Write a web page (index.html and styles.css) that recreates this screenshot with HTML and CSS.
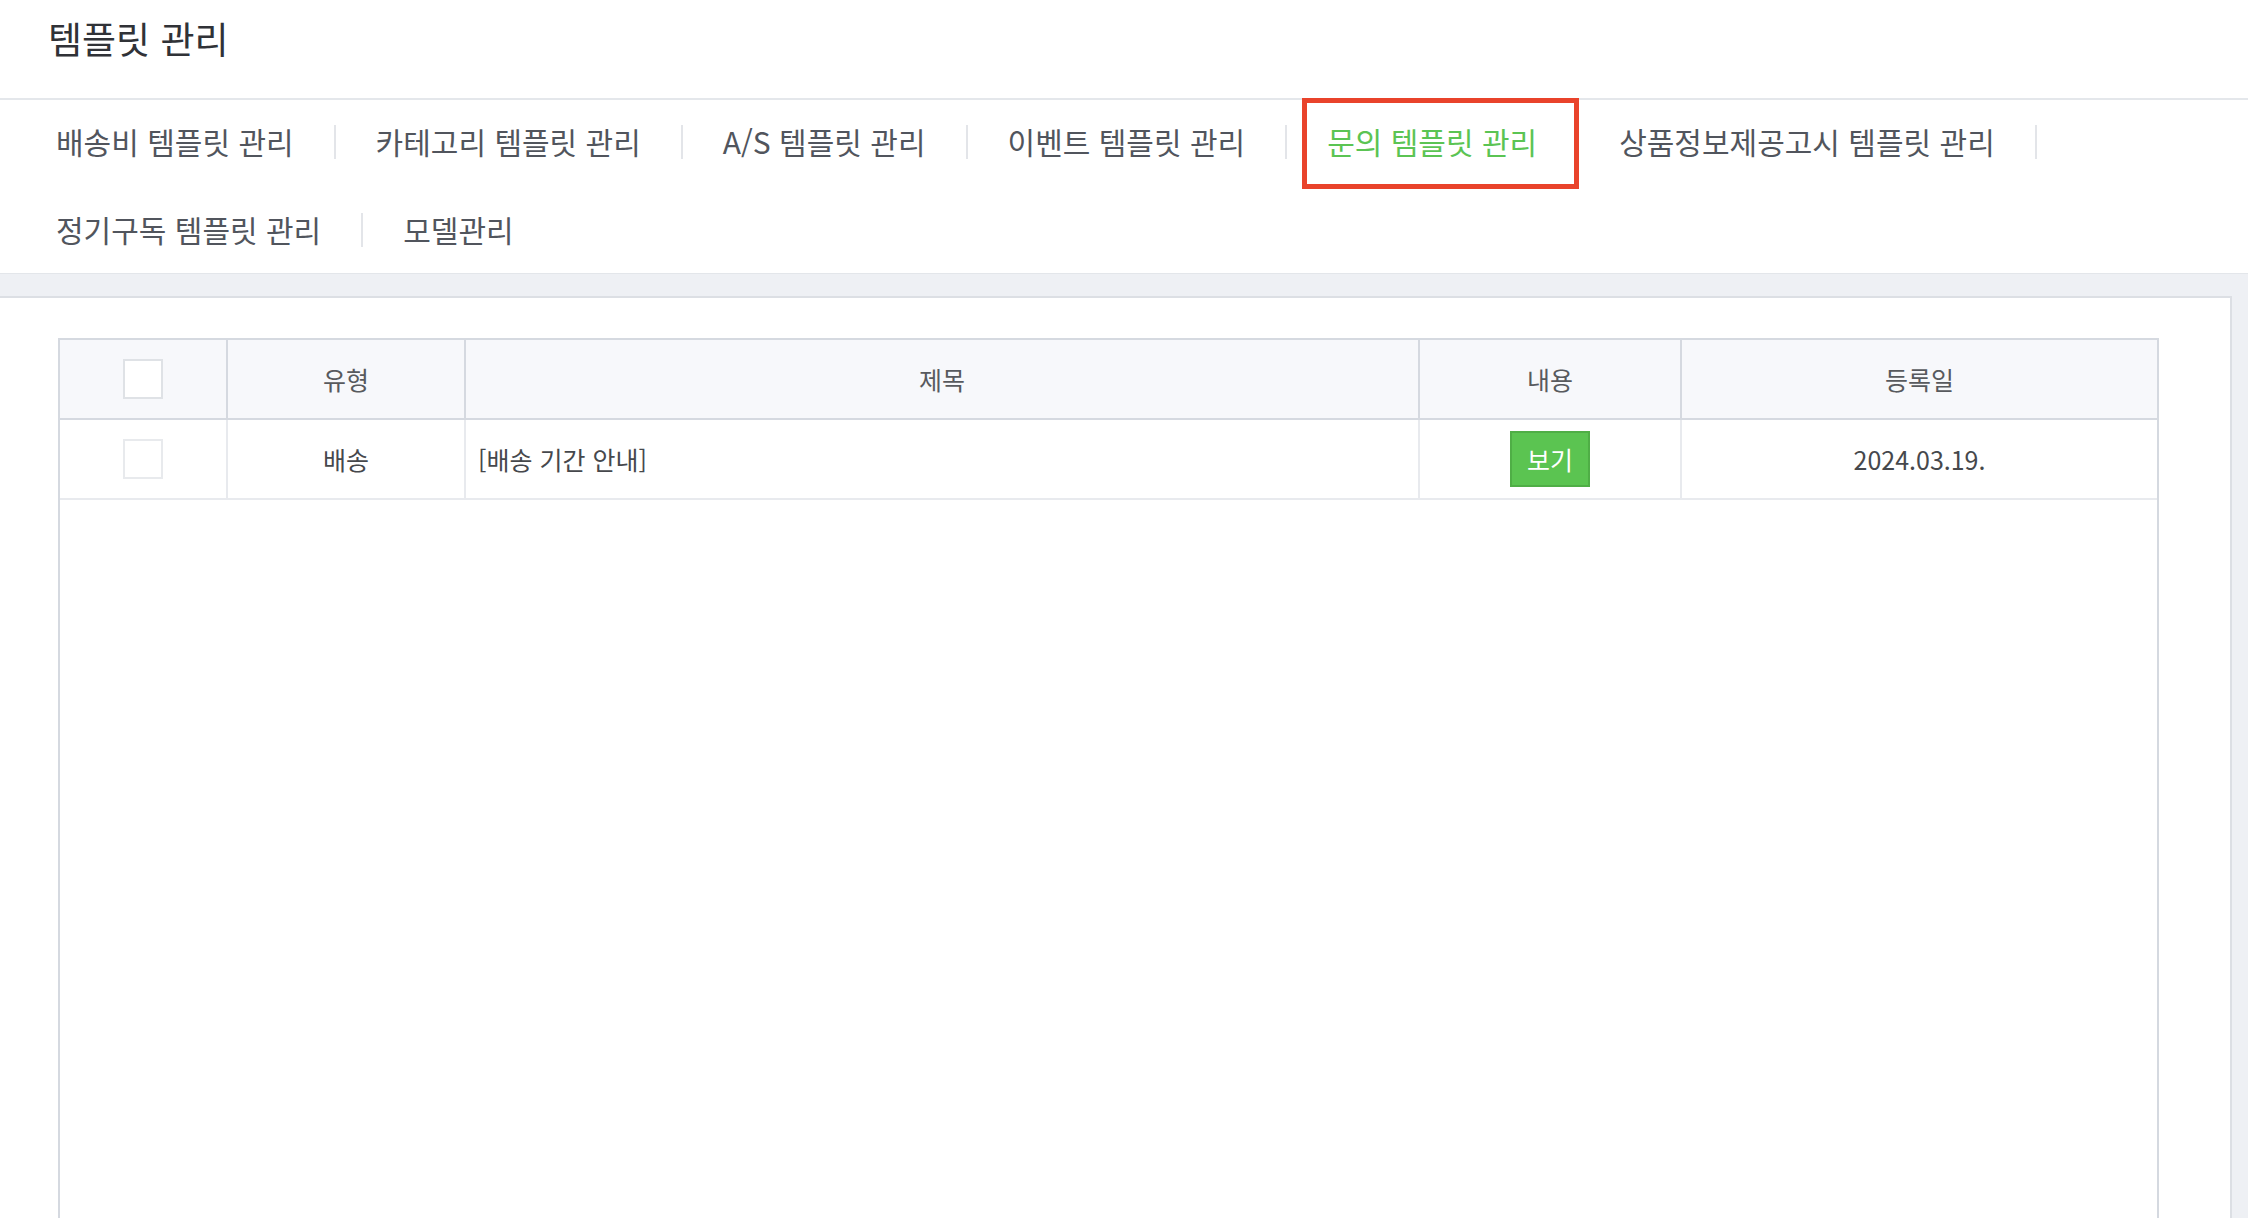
FILE: index.html
```html
<!DOCTYPE html>
<html lang="ko">

<head>
    <meta charset="UTF-8">
    <meta name="viewport" content="width=device-width, initial-scale=1.0">
    <title>템플릿 관리</title>
    <link rel="stylesheet" href="styles.css">
</head>

<body>
    <div class="Page">
        <div class="pageHead">
            <h1>템플릿 관리</h1>
        </div>
        <ul class="tabs">
            <li>배송비 템플릿 관리</li>
            <li>카테고리 템플릿 관리</li>
            <li>A/S 템플릿 관리</li>
            <li>이벤트 템플릿 관리</li>
            <li class="on">문의 템플릿 관리</li>
            <li>상품정보제공고시 템플릿 관리</li>
            <li>정기구독 템플릿 관리</li>
            <li>모델관리</li>
        </ul>
        <div class="body">
            <div class="panel">
                <div class="tableBox">
                    <table>
                        <thead>
                            <tr>
                                <th class="cCheck"><input type="checkbox" class="chk"></th>
                                <th class="cType">유형</th>
                                <th class="cTitle">제목</th>
                                <th class="cView">내용</th>
                                <th>등록일</th>
                            </tr>
                        </thead>
                        <tbody>
                            <tr>
                                <td><input type="checkbox" class="chk"></td>
                                <td>배송</td>
                                <td class="subject">[배송 기간 안내]</td>
                                <td><button class="btnView">보기</button></td>
                                <td class="date">2024.03.19.</td>
                            </tr>
                        </tbody>
                    </table>
                </div>
            </div>
        </div>
    </div>
</body>

</html>
```
FILE: styles.css
```css
* {
    border: 0px;
    margin: 0px;
    padding: 0px;
    box-sizing: border-box;
}

html,
body {
    height: 100%;
    overflow: hidden;
}

body {
    font-family: "Noto Sans CJK KR", "Noto Sans", sans-serif;
    color: #51555d;
    background-color: #fff;
}

.Page {
    display: flex;
    flex-direction: column;
    height: 100vh;
}

.pageHead {
    height: 100px;
    padding: 19px 0 0 48px;
    border-bottom: 2px solid #e4e7eb;
}

.pageHead h1 {
    font-size: 37px;
    font-weight: 400;
    line-height: 38px;
    color: #303237;
}

.tabs {
    list-style: none;
    display: flex;
    flex-wrap: wrap;
    row-gap: 54px;
    padding: 25px 0 26px 16px;
    border-bottom: 1px solid #e3e6ea;
}

.tabs li {
    position: relative;
    height: 34px;
    padding: 0 40px;
    font-size: 30px;
    line-height: 32px;
    border-right: 2px solid #e3e5e9;
    cursor: pointer;
}

.tabs li:last-child {
    border-right: 0;
}

.tabs li.on {
    color: #5bc453;
}

.tabs li.on::after {
    content: "";
    position: absolute;
    top: -27px;
    bottom: -30px;
    left: 15px;
    right: -2px;
    border: 5px solid #e9432b;
}

.body {
    flex: 1;
    display: flex;
    min-height: 0;
    padding-top: 22px;
    background-color: #eef0f4;
}

.panel {
    flex: 1;
    display: flex;
    flex-direction: column;
    margin-right: 16px;
    padding: 40px 71px 0 58px;
    background-color: #fff;
    border-top: 2px solid #dcdfe4;
    border-right: 2px solid #dcdfe4;
}

.tableBox {
    flex: 1;
    border: 2px solid #d5d9e0;
    border-bottom: 0;
}

table {
    width: 100%;
    table-layout: fixed;
    border-spacing: 0;
    font-size: 25px;
}

th,
td {
    height: 80px;
    text-align: center;
    vertical-align: middle;
}

th {
    font-weight: 400;
    color: #585a5e;
    background-color: #f7f8fb;
    border-right: 2px solid #d5d9e0;
    border-bottom: 2px solid #d5d9e0;
}

td {
    color: #46484c;
    border-right: 2px solid #e8eaee;
    border-bottom: 2px solid #e8eaee;
}

th:last-child,
td:last-child {
    border-right: 0;
}

.cCheck {
    width: 168px;
}

.cType {
    width: 238px;
}

.cTitle {
    width: 954px;
}

.cView {
    width: 262px;
}

.chk {
    appearance: none;
    display: block;
    width: 40px;
    height: 40px;
    margin: 0 auto;
    background-color: #fff;
    border: 2px solid #dfe2e6;
}

td .chk {
    border-color: #e8eaed;
}

td.subject {
    text-align: left;
    padding-left: 12px;
}

.btnView {
    width: 80px;
    height: 56px;
    font-family: inherit;
    font-size: 25px;
    color: #fff;
    background-color: #5bc451;
    border: 2px solid #4fae46;
    cursor: pointer;
}
```
